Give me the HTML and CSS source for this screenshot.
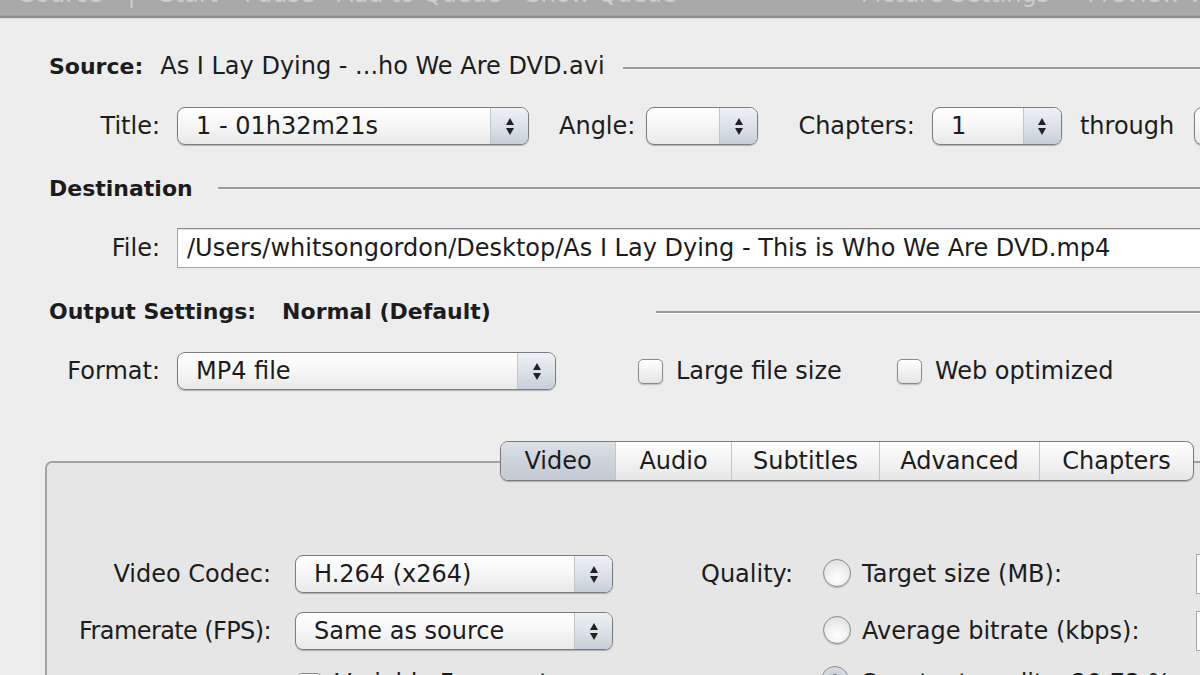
FILE: index.html
```html
<!DOCTYPE html>
<html>
<head>
<meta charset="utf-8">
<link rel="stylesheet" href="styles.css">
</head>
<body>
<div class="window">
  <div class="toolbar">
    <span class="tb-item tb-source">Source</span>
    <span class="tb-item tb-sep">|</span>
    <span class="tb-item tb-start">Start</span>
    <span class="tb-item tb-pause">Pause</span>
    <span class="tb-item tb-add">Add to Queue</span>
    <span class="tb-item tb-show">Show Queue</span>
    <span class="tb-item tb-pic">Picture Settings</span>
    <span class="tb-item tb-prev">Preview Window</span>
  </div>

  <div class="main">
    <div class="heading-row row-source">
      <span class="bold">Source:</span>
      <span class="source-name">As I Lay Dying - ...ho We Are DVD.avi</span>
      <span class="rule rule-source"></span>
    </div>

    <div class="row row-title">
      <span class="label">Title:</span>
      <div class="select sel-title"><span class="sel-text">1 - 01h32m21s</span><span class="stepper"><i class="up"></i><i class="down"></i></span></div>
      <span class="lbl-angle">Angle:</span>
      <div class="select sel-angle"><span class="sel-text"></span><span class="stepper"><i class="up"></i><i class="down"></i></span></div>
      <span class="lbl-chapters">Chapters:</span>
      <div class="select sel-chap"><span class="sel-text">1</span><span class="stepper"><i class="up"></i><i class="down"></i></span></div>
      <span class="lbl-through">through</span>
      <div class="select sel-chap2"><span class="sel-text">1</span><span class="stepper"><i class="up"></i><i class="down"></i></span></div>
    </div>

    <div class="heading-row row-dest">
      <span class="bold">Destination</span>
      <span class="rule rule-dest"></span>
    </div>

    <div class="row row-file">
      <span class="label">File:</span>
      <div class="textfield">/Users/whitsongordon/Desktop/As I Lay Dying - This is Who We Are DVD.mp4</div>
    </div>

    <div class="heading-row row-output">
      <span class="bold">Output Settings:</span>
      <span class="bold preset">Normal (Default)</span>
      <span class="rule rule-output"></span>
    </div>

    <div class="row row-format">
      <span class="label">Format:</span>
      <div class="select sel-format"><span class="sel-text">MP4 file</span><span class="stepper"><i class="up"></i><i class="down"></i></span></div>
      <span class="checkbox cb-large"></span>
      <span class="cb-label">Large file size</span>
      <span class="checkbox cb-web"></span>
      <span class="cb-label">Web optimized</span>
    </div>
  </div>

  <div class="tabs">
    <span class="tab tab-video active">Video</span>
    <span class="tab tab-audio">Audio</span>
    <span class="tab tab-subs">Subtitles</span>
    <span class="tab tab-adv">Advanced</span>
    <span class="tab tab-chap">Chapters</span>
  </div>
  <div class="panel">
    <div class="panel-row row-codec">
      <span class="plabel">Video Codec:</span>
      <div class="select sel-codec"><span class="sel-text">H.264 (x264)</span><span class="stepper"><i class="up"></i><i class="down"></i></span></div>
      <span class="lbl-quality">Quality:</span>
      <span class="radio"></span>
      <span class="radio-label">Target size (MB):</span>
      <span class="numfield"></span>
    </div>
    <div class="panel-row row-fps">
      <span class="plabel fps-label">Framerate (FPS):</span>
      <div class="select sel-codec"><span class="sel-text">Same as source</span><span class="stepper"><i class="up"></i><i class="down"></i></span></div>
      <span class="lbl-quality"></span>
      <span class="radio"></span>
      <span class="radio-label">Average bitrate (kbps):</span>
      <span class="numfield"></span>
    </div>
    <div class="panel-row row-third">
      <span class="plabel"></span>
      <span class="checkbox cb-vfr"></span>
      <span class="cb-label vfr-label">Variable Framerate</span>
      <span class="radio selected"></span>
      <span class="radio-label">Constant quality: 20.73 %</span>
    </div>
  </div>
</div>
</body>
</html>
```

FILE: styles.css
```css
* { box-sizing: border-box; }
html, body {
  margin: 0;
  padding: 0;
  width: 1200px;
  height: 675px;
  overflow: hidden;
  background: #ededed;
}
body {
  font-family: "DejaVu Sans", "Liberation Sans", sans-serif;
  font-size: 24px;
  color: #1c1c1c;
}
.window {
  width: 1200px;
  height: 675px;
  overflow: hidden;
  background: #ededed;
}

/* toolbar */
.toolbar {
  height: 19px;
  background: #a9a9a9;
  border-bottom: 1px solid #dedede;
  box-shadow: inset 0 -2px 0 #8d8d8d, inset 0 -3px 0 #a0a0a0;
  display: flex;
  align-items: flex-start;
  overflow: hidden;
  white-space: nowrap;
}
.tb-item {
  flex: none;
  color: #cdcdcd;
  font-size: 24px;
  line-height: 24px;
  margin-top: -18px;
}
.tb-source { margin-left: 20px; }
.tb-sep { margin-left: 25px; }
.tb-start { margin-left: 24px; }
.tb-pause { margin-left: 26px; }
.tb-add { margin-left: 22px; }
.tb-show { margin-left: 24px; }
.tb-pic { margin-left: 184px; }
.tb-prev { margin-left: 38px; }

/* main form */
.main {
  padding-left: 49px;
}
.heading-row, .row {
  display: flex;
  align-items: center;
  height: 40px;
  white-space: nowrap;
}
.heading-row > *, .row > *, .panel-row > * { flex: none; }
.bold {
  font-weight: bold;
  font-size: 22px;
}
.row-source { margin-top: 27px; }
.source-name { margin-left: 17px; }
.rule {
  flex: 1 1 auto !important;
  height: 3px;
  border-top: 2px solid #9a9a9a;
  border-bottom: 1px solid #f8f8f8;
  margin-top: 4px;
}
.rule-source { margin-left: 18px; }
.row-title { margin-top: 20px; }
.row-dest { margin-top: 22px; }
.rule-dest { margin-left: 25px; margin-top: 0; }
.row-file { margin-top: 20px; }
.row-output { margin-top: 23px; }
.preset { margin-left: 26px; }
.rule-output { margin-left: 165px; margin-top: 2px; }
.row-format { margin-top: 20px; }

.label {
  width: 111px;
  text-align: right;
  margin-right: 17px;
}

/* popup buttons */
.select {
  display: flex;
  height: 38px;
  border: 1.5px solid #7d7d7d;
  border-radius: 8px;
  background: linear-gradient(#ffffff 0%, #f6f6f6 50%, #e9e9e9 100%);
  box-shadow: 0 1px 1px rgba(0,0,0,0.25);
  overflow: hidden;
}
.sel-text {
  flex: 1;
  padding-left: 18px;
  line-height: 36px;
  font-size: 24px;
}
.stepper {
  width: 38px;
  border-left: 1px solid #c2c6cc;
  background: linear-gradient(#eef1f5 0%, #dce2e9 50%, #c6cfda 100%);
  display: flex;
  flex-direction: column;
  align-items: center;
  justify-content: center;
  gap: 3px;
}
.stepper i {
  display: block;
  width: 0;
  height: 0;
  border-left: 4.5px solid transparent;
  border-right: 4.5px solid transparent;
}
.stepper .up { border-bottom: 7px solid #222; }
.stepper .down { border-top: 7px solid #222; }

.sel-title { width: 352px; }
.lbl-angle { margin-left: 30px; }
.sel-angle { width: 112px; margin-left: 11px; }
.lbl-chapters { margin-left: 40px; }
.sel-chap { width: 130px; margin-left: 17px; }
.lbl-through { margin-left: 18px; }
.sel-chap2 { width: 130px; margin-left: 20px; }

.textfield {
  width: 1100px;
  height: 40px;
  background: #ffffff;
  border: 1px solid #a6a6a6;
  border-top-color: #8a8a8a;
  box-shadow: inset 0 1px 1px rgba(0,0,0,0.12);
  padding-left: 9px;
  line-height: 38px;
  font-size: 24px;
}

.sel-format { width: 379px; }

.checkbox {
  width: 25px;
  height: 25px;
  border: 1.5px solid #8a8a8a;
  border-radius: 5px;
  background: linear-gradient(#ffffff, #e4e4e4);
  box-shadow: 0 1px 1px rgba(0,0,0,0.2);
}
.cb-large { margin-left: 82px; }
.cb-web { margin-left: 55px; }
.cb-label { margin-left: 13px; }

/* tabs */
.tabs {
  position: relative;
  z-index: 2;
  display: flex;
  margin-left: 500px;
  margin-top: 50px;
  margin-bottom: -20px;
  width: 694px;
  height: 40px;
  border: 1.5px solid #7b7b7b;
  border-radius: 8px;
  overflow: hidden;
  background: linear-gradient(#ffffff 0%, #f3f3f3 50%, #e6e6e6 100%);
  box-shadow: 0 1px 1px rgba(0,0,0,0.25);
  white-space: nowrap;
}
.tab {
  flex: none;
  text-align: center;
  line-height: 38px;
  border-left: 1px solid #c4c4c4;
}
.tab:first-child { border-left: none; }
.tab.active {
  background: linear-gradient(#dde2e8 0%, #cdd3db 50%, #c3cad3 100%);
}
.tab-video { width: 114px; }
.tab-audio { width: 116px; }
.tab-subs { width: 148px; }
.tab-adv { width: 160px; }
.tab-chap { flex: 1 1 auto; }

.panel {
  margin-left: 45px;
  height: 300px;
  border-top: 2px solid #a3a3a3;
  border-left: 2px solid #a3a3a3;
  border-top-left-radius: 7px;
  background: #e6e6e6;
  padding-top: 91px;
}
.panel-row {
  display: flex;
  align-items: center;
  height: 40px;
  white-space: nowrap;
  margin-bottom: 17px;
}
.row-fps { margin-bottom: 12px; }
.plabel {
  width: 224px;
  text-align: right;
  margin-right: 24px;
}
.fps-label { letter-spacing: -0.6px; }
.sel-codec { width: 318px; }
.lbl-quality { width: 92px; margin-left: 88px; }
.radio {
  width: 28px;
  height: 28px;
  border-radius: 50%;
  border: 1.5px solid #8a8a8a;
  background: radial-gradient(circle at 50% 70%, #ffffff 0%, #f2f2f2 40%, #d8d8d8 100%);
  box-shadow: 0 1px 1px rgba(0,0,0,0.2);
  margin-left: 30px;
  margin-top: -2px;
}
.radio.selected {
  background: radial-gradient(circle, #222 0 5px, #c8cfd8 6px, #e9edf2 100%);
  margin-top: -6px;
}
.radio-label { margin-left: 11px; width: 334px; }
.numfield {
  width: 100px;
  height: 40px;
  background: #fff;
  border: 1px solid #a6a6a6;
}
.cb-vfr { margin-left: 2px; margin-top: 4px; }
.vfr-label { width: 486px; }
.row-third .radio { margin-left: 0; }
```
